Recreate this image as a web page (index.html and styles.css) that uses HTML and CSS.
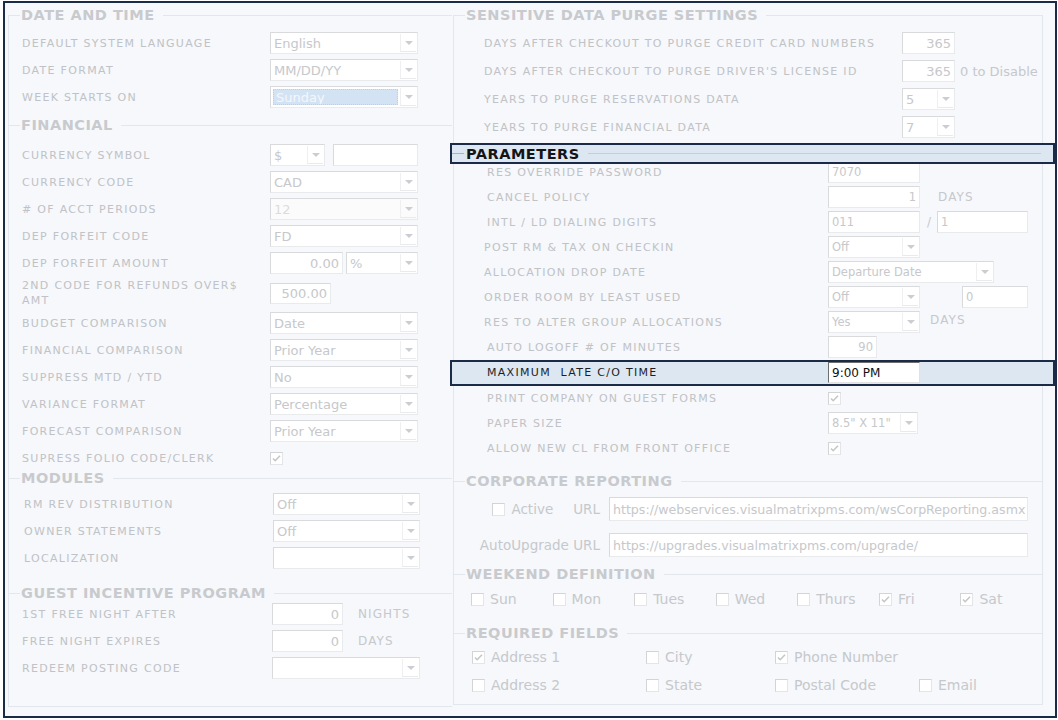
FILE: index.html
```html
<!DOCTYPE html>
<html lang="en">
<head>
  <meta charset="UTF-8" />
  <title>Property Settings</title>
  <link rel="stylesheet" href="styles.css">
</head>
<body>

<div class="frame">

  <div class="col left">

    <section class="group g-date">
      <div class="title"><span>DATE AND TIME</span></div>
      <div class="row"><span class="lab">DEFAULT SYSTEM LANGUAGE</span><div class="sel w148"><span class="val">English</span><span class="arr"></span></div></div>
      <div class="row"><span class="lab">DATE FORMAT</span><div class="sel w148"><span class="val">MM/DD/YY</span><span class="arr"></span></div></div>
      <div class="row"><span class="lab">WEEK STARTS ON</span><div class="sel w148"><span class="val picked">Sunday</span><span class="arr"></span></div></div>
    </section>

    <section class="group g-fin">
      <div class="title"><span>FINANCIAL</span></div>
      <div class="row"><span class="lab">CURRENCY SYMBOL</span><div class="sel w55"><span class="val">$</span><span class="arr"></span></div><div class="inp w85 gap8"></div></div>
      <div class="row"><span class="lab">CURRENCY CODE</span><div class="sel w148"><span class="val">CAD</span><span class="arr"></span></div></div>
      <div class="row"><span class="lab"># OF ACCT PERIODS</span><div class="sel w148 off"><span class="val">12</span><span class="arr"></span></div></div>
      <div class="row"><span class="lab">DEP FORFEIT CODE</span><div class="sel w148"><span class="val">FD</span><span class="arr"></span></div></div>
      <div class="row"><span class="lab">DEP FORFEIT AMOUNT</span><div class="inp r w73">0.00</div><div class="sel w72 gap3"><span class="val">%</span><span class="arr"></span></div></div>
      <div class="row tall"><span class="lab two">2ND CODE FOR REFUNDS OVER$<br>AMT</span><div class="inp r w61 h21">500.00</div></div>
      <div class="row"><span class="lab">BUDGET COMPARISON</span><div class="sel w148"><span class="val">Date</span><span class="arr"></span></div></div>
      <div class="row"><span class="lab">FINANCIAL COMPARISON</span><div class="sel w148"><span class="val">Prior Year</span><span class="arr"></span></div></div>
      <div class="row"><span class="lab">SUPPRESS MTD / YTD</span><div class="sel w148"><span class="val">No</span><span class="arr"></span></div></div>
      <div class="row"><span class="lab">VARIANCE FORMAT</span><div class="sel w148"><span class="val">Percentage</span><span class="arr"></span></div></div>
      <div class="row"><span class="lab">FORECAST COMPARISON</span><div class="sel w148"><span class="val">Prior Year</span><span class="arr"></span></div></div>
      <div class="row"><span class="lab">SUPRESS FOLIO CODE/CLERK</span><span class="cb"><svg viewBox="0 0 11 11"><path d="M2 5.5l2.2 2.2L9 2.8"/></svg></span></div>
    </section>

    <section class="group g-mod">
      <div class="title"><span>MODULES</span></div>
      <div class="row"><span class="lab">RM REV DISTRIBUTION</span><div class="sel w147"><span class="val">Off</span><span class="arr"></span></div></div>
      <div class="row"><span class="lab">OWNER STATEMENTS</span><div class="sel w147"><span class="val">Off</span><span class="arr"></span></div></div>
      <div class="row"><span class="lab">LOCALIZATION</span><div class="sel w147"><span class="val"></span><span class="arr"></span></div></div>
    </section>

    <section class="group g-guest">
      <div class="title"><span>GUEST INCENTIVE PROGRAM</span></div>
      <div class="row"><span class="lab">1ST FREE NIGHT AFTER</span><div class="inp r w71">0</div><span class="unit">NIGHTS</span></div>
      <div class="row"><span class="lab">FREE NIGHT EXPIRES</span><div class="inp r w71">0</div><span class="unit">DAYS</span></div>
      <div class="row"><span class="lab">REDEEM POSTING CODE</span><div class="sel w148"><span class="val"></span><span class="arr"></span></div></div>
    </section>

  </div>

  <div class="col right">

    <section class="group g-sens">
      <div class="title"><span>SENSITIVE DATA PURGE SETTINGS</span></div>
      <div class="row"><span class="lab">DAYS AFTER CHECKOUT TO PURGE CREDIT CARD NUMBERS</span><div class="inp r w53">365</div></div>
      <div class="row"><span class="lab">DAYS AFTER CHECKOUT TO PURGE DRIVER'S LICENSE ID</span><div class="inp r w53">365</div><span class="note">0 to Disable</span></div>
      <div class="row"><span class="lab">YEARS TO PURGE RESERVATIONS DATA</span><div class="sel w53"><span class="val">5</span><span class="arr"></span></div></div>
      <div class="row"><span class="lab">YEARS TO PURGE FINANCIAL DATA</span><div class="sel w53"><span class="val">7</span><span class="arr"></span></div></div>
    </section>

    <section class="group g-par">
      <div class="title hl"><span>PARAMETERS</span></div>
      <div class="row"><span class="lab ind">RES OVERRIDE PASSWORD</span><div class="inp w92">7070</div></div>
      <div class="row"><span class="lab ind">CANCEL POLICY</span><div class="inp r w92">1</div><span class="unit u18">DAYS</span></div>
      <div class="row"><span class="lab ind">INTL / LD DIALING DIGITS</span><div class="inp w92">011</div><span class="slash">/</span><div class="inp w91">1</div></div>
      <div class="row"><span class="lab">POST RM &amp; TAX ON CHECKIN</span><div class="sel w92"><span class="val">Off</span><span class="arr"></span></div></div>
      <div class="row"><span class="lab">ALLOCATION DROP DATE</span><div class="sel w166"><span class="val">Departure Date</span><span class="arr"></span></div></div>
      <div class="row"><span class="lab">ORDER ROOM BY LEAST USED</span><div class="sel w92"><span class="val">Off</span><span class="arr"></span></div><div class="inp w66 gap42">0</div></div>
      <div class="row"><span class="lab">RES TO ALTER GROUP ALLOCATIONS</span><div class="sel w92"><span class="val">Yes</span><span class="arr"></span></div><span class="unit u10 up">DAYS</span></div>
      <div class="row"><span class="lab ind">AUTO LOGOFF # OF MINUTES</span><div class="inp r w49">90</div></div>
      <div class="row hl-row"><span class="lab ind">MAXIMUM&nbsp; LATE C/O TIME</span><div class="inp live w92">9:00 PM</div></div>
      <div class="row"><span class="lab ind">PRINT COMPANY ON GUEST FORMS</span><span class="cb"><svg viewBox="0 0 11 11"><path d="M2 5.5l2.2 2.2L9 2.8"/></svg></span></div>
      <div class="row"><span class="lab ind">PAPER SIZE</span><div class="sel w90"><span class="val">8.5" X 11"</span><span class="arr"></span></div></div>
      <div class="row"><span class="lab ind">ALLOW NEW CL FROM FRONT OFFICE</span><span class="cb"><svg viewBox="0 0 11 11"><path d="M2 5.5l2.2 2.2L9 2.8"/></svg></span></div>
    </section>

    <section class="group g-corp">
      <div class="title"><span>CORPORATE REPORTING</span></div>
      <div class="crow">
        <div class="clab"><span class="cb"></span><span class="txt">Active</span><span class="txt url">URL</span></div>
        <div class="inp link">https://webservices.visualmatrixpms.com/wsCorpReporting.asmx</div>
      </div>
      <div class="crow">
        <div class="clab"><span class="txt">AutoUpgrade URL</span></div>
        <div class="inp link">https://upgrades.visualmatrixpms.com/upgrade/</div>
      </div>
    </section>

    <section class="group g-week">
      <div class="title"><span>WEEKEND DEFINITION</span></div>
      <div class="checks">
        <label class="chk"><span class="cb"></span>Sun</label>
        <label class="chk"><span class="cb"></span>Mon</label>
        <label class="chk"><span class="cb"></span>Tues</label>
        <label class="chk"><span class="cb"></span>Wed</label>
        <label class="chk"><span class="cb"></span>Thurs</label>
        <label class="chk"><span class="cb"><svg viewBox="0 0 11 11"><path d="M2 5.5l2.2 2.2L9 2.8"/></svg></span>Fri</label>
        <label class="chk"><span class="cb"><svg viewBox="0 0 11 11"><path d="M2 5.5l2.2 2.2L9 2.8"/></svg></span>Sat</label>
      </div>
    </section>

    <section class="group g-req">
      <div class="title"><span>REQUIRED FIELDS</span></div>
      <div class="req">
        <label class="chk c1"><span class="cb"><svg viewBox="0 0 11 11"><path d="M2 5.5l2.2 2.2L9 2.8"/></svg></span>Address 1</label>
        <label class="chk c2"><span class="cb"></span>City</label>
        <label class="chk c3"><span class="cb"><svg viewBox="0 0 11 11"><path d="M2 5.5l2.2 2.2L9 2.8"/></svg></span>Phone Number</label>
      </div>
      <div class="req">
        <label class="chk c1"><span class="cb"></span>Address 2</label>
        <label class="chk c2"><span class="cb"></span>State</label>
        <label class="chk c3"><span class="cb"></span>Postal Code</label>
        <label class="chk"><span class="cb"></span>Email</label>
      </div>
    </section>

  </div>

</div>

</body>
</html>
```

FILE: styles.css
```css
* {
  box-sizing: border-box;
}

body {
  margin: 0;
  background: #fff;
  font-family: "DejaVu Sans", Verdana, sans-serif;
  color: #c2c4c7;
}

.frame {
  width: 1054px;
  height: 717px;
  margin: 1px 0 0 3px;
  border: 2px solid #1b2a46;
  background: #f6f8fc;
  display: flex;
}

.col {
  padding-top: 12px;
}

.left {
  width: 447px;
}

.right {
  width: 603px;
}

/* fieldset look: title row draws the top line */
.group {
  display: flex;
  flex-direction: column;
  border-left: 1px solid #e2e7ed;
}

.left .group {
  margin-left: 3px;
}

.right .group {
  margin: 0 12px 0 1px;
  border-right: 1px solid #e2e7ed;
}

.title {
  display: flex;
  align-items: center;
  height: 20px;
  margin: -10px 0 0 -1px;
  font-size: 14.5px;
  font-weight: bold;
  letter-spacing: 0.5px;
  color: #c8cacd;
  white-space: nowrap;
}

.title::before {
  content: "";
  width: 12px;
  border-top: 1px solid #e2e7ed;
}

.title::after {
  content: "";
  flex: 1;
  border-top: 1px solid #e2e7ed;
}

.title span {
  margin: 0 8px 0 1px;
}

.right .title {
  margin-right: -1px;
}

/* highlighted bits */
.title.hl {
  position: relative;
  z-index: 2;
  height: 21px;
  margin: -10.5px -13px -4.5px -4px;
  border: 2px solid #1b2a46;
  background: #dde7f2;
  color: #141414;
}

.title.hl::before {
  width: 12px;
  border-top-color: #a9b3bf;
}

.title.hl::after {
  margin-right: 12px;
  border-top-color: #c4ceda;
}

.title.hl span {
  margin-left: 2px;
}

.row {
  display: flex;
  align-items: center;
  flex-shrink: 0;
}

.lab {
  flex-shrink: 0;
  font-size: 11px;
  letter-spacing: 1.3px;
  color: #c0c2c5;
  white-space: nowrap;
}

/* left column rows */
.left .row {
  height: 27px;
  padding-left: 13px;
}

.left .lab {
  width: 248px;
}

.left .row.tall {
  height: 33px;
}

.lab.two {
  line-height: 15px;
}

.g-date .title { margin-bottom: 4.5px; }
.g-date { padding-bottom: 14.5px; }

.g-fin .title { margin-bottom: 6.5px; }
.g-fin { padding-bottom: 6.5px; }

.g-mod .title { margin-bottom: 2.5px; }
.g-mod { padding-bottom: 21.5px; }
.g-mod .row { padding-left: 15px; }
.g-mod .lab { width: 249px; }

.g-guest .title { margin-bottom: -2.5px; }
.g-guest {
  padding-bottom: 24.5px;
  border-bottom: 1px solid #e2e7ed;
}
.g-guest .lab { width: 250px; }

/* right column rows */
.g-sens .title { margin-bottom: 4px; }
.g-sens { padding-bottom: 12.5px; }

.g-sens .row {
  height: 28px;
  padding-left: 30px;
}

.g-sens .lab {
  width: 418px;
}

.g-par {
  padding-bottom: 20.5px;
}

.g-par .row {
  height: 25px;
  padding-left: 30px;
}

.g-par .lab {
  width: 344px;
}

.lab.ind {
  padding-left: 3px;
}

.g-par .row.hl-row {
  position: relative;
  z-index: 2;
  height: 26px;
  margin: 0 -13px 0 -4px;
  padding-left: 32px;
  border: 2px solid #1b2a46;
  background: #dde7f2;
}

.hl-row .lab {
  color: #1e1e1e;
}

/* controls */
.inp,
.sel {
  display: flex;
  align-items: center;
  flex-shrink: 0;
  height: 22px;
  padding: 0 3px;
  border: 1px solid #e9eaec;
  border-top-color: #d9dadc;
  border-left-color: #d9dadc;
  background: #fff;
  font-size: 13px;
  color: #c6c8cb;
  white-space: nowrap;
  overflow: hidden;
}

.inp.r {
  justify-content: flex-end;
}

.sel {
  padding-right: 1px;
}

.sel .val {
  flex: 1;
  overflow: hidden;
}

.sel .val.picked {
  align-self: stretch;
  margin: 2px 2px 2px -1px;
  padding-left: 2px;
  display: flex;
  align-items: center;
  background: #d3e3f4;
  border: 1px dotted #bfcfe2;
  color: #f3f7fb;
}

.sel.off {
  background: #fbfbfb;
  color: #dcdcdc;
}

.arr {
  width: 16px;
  height: 18px;
  display: flex;
  align-items: center;
  justify-content: center;
  border-left: 1px solid #eeeff1;
  border-bottom: 1px solid #e9eaec;
}

.arr::before {
  content: "";
  border-left: 4px solid transparent;
  border-right: 4px solid transparent;
  border-top: 4px solid #cbcdd0;
}

.g-par .inp,
.g-par .sel {
  font-size: 11.5px;
}

.g-par .inp.live {
  height: 21px;
  border-color: #6e6e6e #e2e2e2 #e2e2e2 #6e6e6e;
  font-size: 12px;
  color: #111;
}

.w49 { width: 49px; }
.w53 { width: 53px; }
.w55 { width: 55px; }
.w61 { width: 61px; }
.w66 { width: 66px; }
.w71 { width: 71px; }
.w72 { width: 72px; }
.w73 { width: 73px; }
.w85 { width: 85px; }
.w90 { width: 90px; }
.w91 { width: 91px; }
.w92 { width: 92px; }
.w147 { width: 147px; }
.w148 { width: 148px; }
.w166 { width: 166px; }
.h21 { height: 21px; }

.gap3 { margin-left: 3px; }
.gap8 { margin-left: 8px; }
.gap42 { margin-left: 42px; }

.unit {
  margin-left: 15px;
  font-size: 12px;
  letter-spacing: 1.1px;
  color: #c6c8cb;
}

.unit.u18 { margin-left: 18px; }
.unit.u10 { margin-left: 10px; }
.unit.up { margin-top: -5px; }

.slash {
  margin: 0 6px 0 7px;
  font-size: 12px;
  color: #c6c8cb;
}

.note {
  margin-left: 5px;
  font-size: 13px;
  color: #c6c8cb;
}

.cb {
  display: inline-flex;
  align-items: center;
  justify-content: center;
  flex-shrink: 0;
  width: 13px;
  height: 13px;
  border: 1px solid #e4e5e7;
  border-top-color: #d3d4d6;
  border-left-color: #d3d4d6;
  background: #fff;
}

.cb svg {
  width: 11px;
  height: 11px;
  fill: none;
  stroke: #c4c6c9;
  stroke-width: 1.6;
}

/* corporate reporting */
.g-corp {
  padding: 0 0 11px;
}

.crow {
  display: flex;
  align-items: center;
  height: 36px;
}

.clab {
  width: 146px;
  display: flex;
  align-items: center;
  justify-content: flex-end;
  font-size: 13.5px;
  color: #c6c8cb;
}

.clab .txt {
  margin-left: 6px;
}

.clab .txt.url {
  margin-left: 20px;
}

.inp.link {
  width: 419px;
  height: 24px;
  margin-left: 9px;
  font-size: 12.6px;
}

/* check rows */
.g-week {
  padding-bottom: 13px;
}

.checks {
  display: flex;
  align-items: center;
  height: 30px;
  padding-left: 17px;
}

.chk {
  display: flex;
  align-items: center;
  gap: 6px;
  font-size: 14px;
  color: #c6c8cb;
}

.checks .chk {
  width: 84px;
}

.g-req {
  padding: 6px 0 5px;
  border-bottom: 1px solid #e2e7ed;
}

.req {
  display: flex;
  align-items: center;
  height: 28px;
  padding-left: 18px;
}

.req .c1 { width: 174px; }
.req .c2 { width: 129px; }
.req .c3 { width: 144px; }
```
